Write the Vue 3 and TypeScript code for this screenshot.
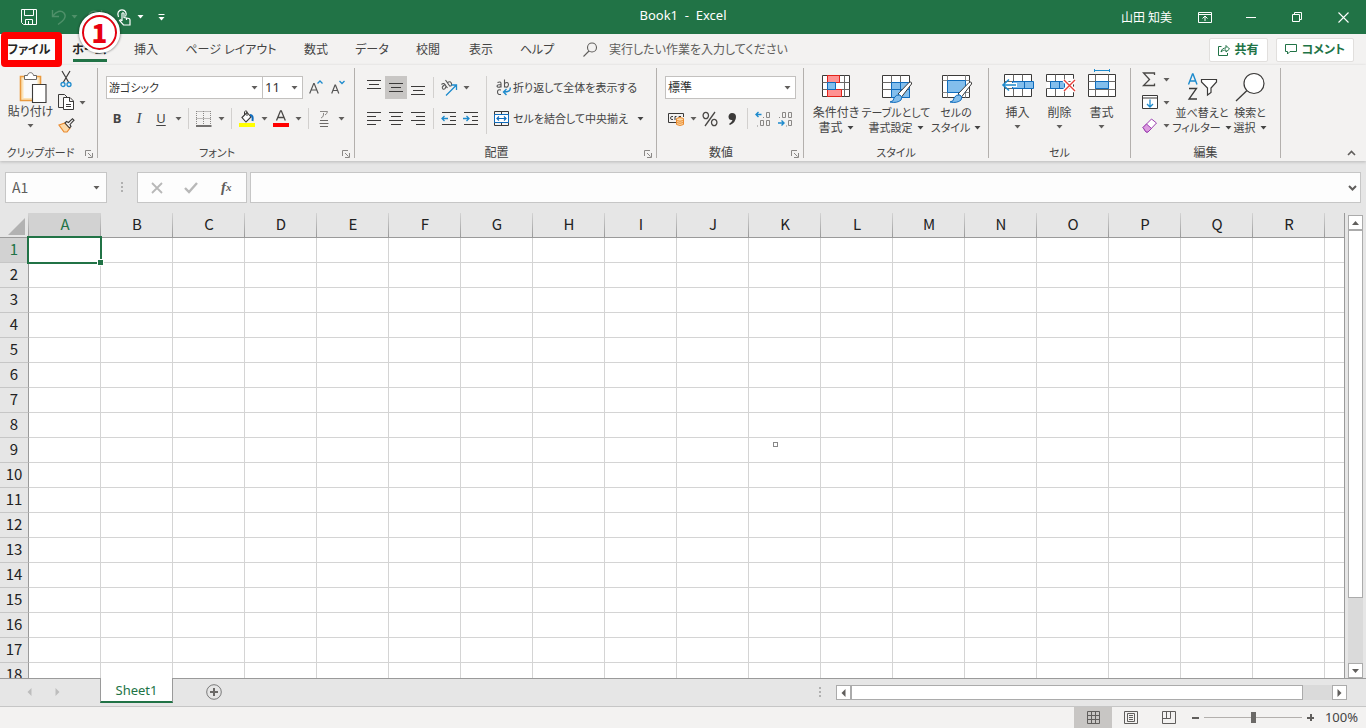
<script setup lang="ts">
import { h, ref } from 'vue'

type Shape = { d: string; f?: string; s?: string; w?: number; dash?: string }
type Glyph = { w: number; h: number; shapes: Shape[] }

const ink = '#3b3a39'
const soft = '#6b6967'
const blue = '#1e8bcd'
const deep = '#0f6cbd'
const sky = '#83beec'
const line = (d: string, s = ink, w = 1): Shape => ({ d, s, w })
const fill = (d: string, f: string): Shape => ({ d, f })

const frame = 'M.5 .5H27.5V22.5H.5Z'
const brush: Shape[] = [
  { d: 'M16 19L27 7.500Q30 6 29.500 9L19.500 22Z', f: '#fff', s: ink, w: 1 },
  { d: 'M8 27Q12 26.500 12 23Q14 19 18 20Q21 22 19 25Q15 28.500 8 27Z', f: sky, s: deep, w: 1 },
]

const glyphs: Record<string, Glyph> = {
  caret: { w: 7, h: 4, shapes: [fill('M.5 0H6.5L3.5 3.5Z', 'currentColor')] },
  save: { w: 16, h: 16, shapes: [line('M.5 .5H15.5V15.5H2.5L.5 13.5ZM3.5 .5V6.5H12.5V.5M4.5 15.5V10.5H11.5V15.5M7.5 12V15', '#fff')] },
  undo: { w: 16, h: 16, shapes: [line('M1.5 1V7.5H8M2 7C5 2 10 1 13 4C16 8 13 11 7 15.5', '#4f9069', 1.4)] },
  redo: { w: 16, h: 16, shapes: [line('M14.5 1V7.5H8M14 7C11 2 6 1 3 4C0 8 3 11 9 15.5', '#4f9069', 1.4)] },
  touch: { w: 14, h: 17, shapes: [line('M1.5 8C-.5 4 2 .8 5 .8S10.500 4 8.500 7.500M5 12V4.500Q6 3 7 4.500V8.500L12 9.500Q13 10 13 11V16H6.500L2.500 11.500Q3.500 10 5 12M9.500 9V11', '#fff', 1.2)] },
  more: { w: 7, h: 7, shapes: [line('M.5 .5H6.500', '#fff'), fill('M.5 3H6.500L3.500 6.500Z', '#fff')] },
  ribbonMode: { w: 14, h: 11, shapes: [line('M.5 .5H13.500V10.500H.5ZM.5 2.500H13.500M7 9V4.500M4.500 6.500L7 4L9.500 6.500', '#fff')] },
  minimize: { w: 10, h: 10, shapes: [line('M0 5.500H10', '#fff')] },
  restore: { w: 10, h: 10, shapes: [line('M.5 2.500H7.500V9.500H.5ZM2.500 2V.5H9.500V7.500H8', '#fff')] },
  close: { w: 11, h: 11, shapes: [line('M.5 .5L10.500 10.500M10.500 .5L.5 10.500', '#fff', 1.1)] },
  search: { w: 15, h: 15, shapes: [line('M13.500 5.500A4.500 4.500 0 1 1 4.500 5.500A4.500 4.500 0 1 1 13.500 5.500ZM6 9L.5 14.500', '#605e5c', 1.1)] },
  share: { w: 12, h: 12, shapes: [line('M3.500 2.500H.5V11.500H9.500V9M3 8C3.500 5 5.500 4 8 4V1.500L11.500 5L8 8V6C6 6 4.500 6.500 3 8Z', '#217346')] },
  comment: { w: 12, h: 11, shapes: [line('M.5 .5H11.500V7.500H5L2.500 10V7.500H.5Z', '#217346')] },
  paste: { w: 28, h: 31, shapes: [
    { d: 'M1.500 4.500H21.500V28.500H1.500Z', f: '#fbe3b8', s: '#ea9a3e', w: 1.6 },
    fill('M4.500 7H18.500V26H4.500Z', '#fafafa'),
    { d: 'M5.500 7.500V3.500H8.500C9 -.3 14 -.3 14.500 3.500H17.500V7.500Z', f: '#fff', s: soft, w: 1 },
    { d: 'M13.500 12.500H27V30.500H13.500Z', f: '#fff', s: ink, w: 1.1 }] },
  cut: { w: 12, h: 17, shapes: [line('M2 0L8.500 11M10 0L3.500 11', ink, 1.2), line('M5 13.500A2 2 0 1 1 1 13.500A2 2 0 1 1 5 13.500ZM11 13.500A2 2 0 1 1 7 13.500A2 2 0 1 1 11 13.500Z', blue, 1.3)] },
  copy: { w: 17, h: 17, shapes: [
    { d: 'M5 13.500H.5V.5H6.500L9 3', s: ink, w: 1 },
    { d: 'M5.500 3.500H12L15.500 7V15.500H5.500ZM11.500 4V7.500H15M8 10.500H13M8 12.500H13', f: '#fff', s: ink, w: 1 }] },
  painter: { w: 17, h: 15, shapes: [
    { d: 'M1 7L7 5L12 10L9 14H6Z', f: '#fbd9a8', s: '#ea8a2e', w: 1.2 },
    { d: 'M7 5L8.500 3.500L10.500 4.500L14.500 .7L16 2.200L12 6.500L13 8.500L11.500 10Z', f: '#f3f2f1', s: ink, w: 1.1 }] },
  grow: { w: 14, h: 14, shapes: [line('M.7 12.500L4.700 2.500H5.200L9.200 12.500M2.200 9H7.700', '#555', 1.2), line('M8.500 2.500L11 0L13.500 2.500', blue, 1.3)] },
  shrink: { w: 14, h: 14, shapes: [line('M.7 12.500L4 4H4.500L7.800 12.500M2 9.500H6.500', '#555', 1.2), line('M8.500 0L11 2.500L13.500 0', blue, 1.3)] },
  border: { w: 16, h: 16, shapes: [
    { d: 'M.5 .5H15M.5 7.500H15M.5 0V14M7.500 0V14M14.500 0V14', s: '#8a8886', w: 1, dash: '1 1' },
    line('M0 15H15.500', ink, 1.4)] },
  bucket: { w: 16, h: 17, shapes: [
    { d: 'M3 7.500L8 2.500L12 7L7 12Z', f: '#fff', s: ink, w: 1.1 },
    line('M8 6V1.500Q6.500 -.3 5.500 2V5', ink), line('M11 5Q14.500 5 13.500 11', deep, 2),
    fill('M0 13H16V17H0Z', '#ffff00')] },
  fontColor: { w: 16, h: 17, shapes: [line('M3.500 10.500L7.500 .8H8.300L12.300 10.500M5 7.500H11', '#4a4846', 1.3), fill('M0 13H16V17H0Z', '#ff0000')] },
  phonetic: { w: 10, h: 18, shapes: [line('M1 1.500H8.500Q8 4 6 5M4.500 3V5Q4 7.500 2 8', '#8a8886'), line('M1 10.500H9M.5 13.500H9.500M1 16.500H9', soft)] },
  alignTop: { w: 16, h: 15, shapes: [line('M1 .5H15M3 4.500H13M1 8.500H15')] },
  alignMiddle: { w: 16, h: 15, shapes: [line('M1 3.500H15M3 7.500H13M1 11.500H15')] },
  alignBottom: { w: 16, h: 15, shapes: [line('M1 6.500H15M3 10.500H13M1 14.500H15')] },
  alignLeft: { w: 16, h: 15, shapes: [line('M1 1.500H15M1 5.500H10M1 9.500H15M1 13.500H10')] },
  alignCenter: { w: 16, h: 15, shapes: [line('M1 1.500H15M3 5.500H13M1 9.500H15M3 13.500H13')] },
  alignRight: { w: 16, h: 15, shapes: [line('M1 1.500H15M6 5.500H15M1 9.500H15M6 13.500H15')] },
  orient: { w: 18, h: 17, shapes: [
    line('M1.500 5.500Q4 3 6 7L7.500 9M4.500 6Q1 8 3 10Q5 11 6 7.500M5.500 1L10 7.500M7.500 3.500Q10.500 1.500 11.500 4.500Q12 7.500 9.500 7', '#555', 1.1),
    line('M6 16.500L16 6.500M11.500 6H16.500V11', blue, 1.3)] },
  outdent: { w: 16, h: 15, shapes: [line('M1 1.500H15M9 5.500H15M9 9.500H15M1 13.500H15'), line('M7 7.500H1M3.500 5L1 7.500L3.500 10', blue, 1.3)] },
  indent: { w: 16, h: 15, shapes: [line('M1 1.500H15M9 5.500H15M9 9.500H15M1 13.500H15'), line('M0 7.500H6M3.500 5L6 7.500L3.500 10', blue, 1.3)] },
  wrap: { w: 16, h: 17, shapes: [
    line('M1.500 3.500Q5 2 5 4.500V8.500M5 5.500Q1 5.500 1 7.300Q2 9.200 5 7.500M8.500 .5V8.500M8.500 4.500Q12 2 12.500 5.500Q12 9.500 8.500 7.500M5 11Q1.500 10 1.500 13T5 15.500', '#555', 1.1),
    line('M14 8.500Q15.500 13 7.500 13M10.500 10L7.500 13L10.500 16', blue, 1.4)] },
  merge: { w: 15, h: 15, shapes: [line('M.5 .5H14.500V14.500H.5ZM7.500 .5V3.500M7.500 11.500V14.500', ink),
    { d: 'M.5 3.500H14.500V11.500H.5Z', f: '#fff', s: deep, w: 1 }, line('M3 7.500H12M5 5.500L3 7.500L5 9.500M10 5.500L12 7.500L10 9.500', deep, 1.2)] },
  currency: { w: 17, h: 14, shapes: [line('M8 10.500H.5V1.500H15.500V5M5 4.500Q2.500 4 2.500 6T5 7.500M7 8V4.500H8.500M11 8V4.500H13', ink),
    { d: 'M8.500 6.500Q12 4.500 15.500 6.500V12.500Q12 14.500 8.500 12.500Z', f: '#fbd9a8', s: '#ea8a2e', w: 1 },
    line('M8.500 8.500Q12 10 15.500 8.500M8.500 10.500Q12 12 15.500 10.500', '#ea8a2e')] },
  percent: { w: 16, h: 16, shapes: [line('M13 1L3 15M6.500 4.500A2.700 3.200 0 1 1 1.100 4.500A2.700 3.200 0 1 1 6.500 4.500ZM14.900 11.500A2.700 3.200 0 1 1 9.500 11.500A2.700 3.200 0 1 1 14.900 11.500Z', '#4a4846', 1.3)] },
  comma: { w: 10, h: 14, shapes: [fill('M5 1Q9 1 9 5Q9 10 3 13L2 12Q5 10 5.500 8Q1.500 8.500 1.500 4.500Q2 1 5 1Z', ink)] },
  incDecimal: { w: 16, h: 16, shapes: [line('M6.500 3.500H1M3.500 1L1 3.500L3.500 6', blue, 1.4),
    line('M11.500 1.500H14.500V6.500H11.500ZM8.500 6V7M2.500 14.500V15.500M5.500 9.500H8.500V14.500H5.500ZM11.500 9.500H14.500V14.500H11.500Z', '#8a8886')] },
  decDecimal: { w: 16, h: 16, shapes: [line('M1 12H7M4.500 9.500L7 12L4.500 14.500', blue, 1.4),
    line('M2.500 6V7M5.500 1.500H8.500V6.500H5.500ZM11.500 1.500H14.500V6.500H11.500ZM9.500 14.500V15.500M11.500 9.500H14.500V14.500H11.500Z', '#8a8886')] },
  conditional: { w: 28, h: 28, shapes: [{ d: 'M.5 .5H27.500V21.500H.5Z', f: '#fff', s: ink, w: 1 }, line('M.5 7.500H27.500M.5 14.500H27.500M5.500 .5V21.500M22.500 .5V21.500', soft),
    { d: 'M5.500 .5H17.500V7.500H5.500ZM5.500 14.500H19.500V21.500H5.500Z', f: '#ff9292', s: '#e2231a', w: 1 }, { d: 'M5.500 7.500H13.500V14.500H5.500Z', f: sky, s: deep, w: 1 }] },
  tableFormat: { w: 28, h: 28, shapes: [{ d: frame, f: '#fff', s: ink, w: 1 }, fill('M9 8H27V22H9Z', sky), line('M.5 7.500H27.500M.5 14.500H27.500M9.500 .5V22.500M18.500 .5V22.500', soft), line('M9.500 7.500H27.500M9.500 14.500H27.500M9.500 7.500V22.500H27.500V7.500M18.500 7.500V22.500', deep), ...brush] },
  cellStyle: { w: 28, h: 28, shapes: [{ d: frame, f: '#fff', s: ink, w: 1 }, line('M.5 5.500H27.500M.5 17.500H27.500M5.500 .5V22.500M23.500 .5V22.500', '#8a8886'), { d: 'M5.500 5.500H23.500V17.500H5.500Z', f: sky, s: deep, w: 1 }, ...brush] },
  insertCells: { w: 32, h: 29, shapes: [{ d: 'M2.500 2.500H29.500V24.500H2.500Z', f: '#fff', s: ink, w: 1 }, line('M2.500 9.500H29.500M2.500 16.500H29.500M11.500 2.500V24.500M20.500 2.500V24.500', soft),
    { d: 'M10.500 9.500H31.500V16.500H10.500ZM22.500 9.500V16.500', f: sky, s: deep, w: 1 }, line('M15 13H2', '#fff', 4), line('M14 13H1M7 7.500L1 13L7 18.500', blue, 1.6)] },
  deleteCells: { w: 30, h: 29, shapes: [{ d: 'M1.500 9.500V2.500H28.500V24.500H1.500V16.500', f: '#fff', s: ink, w: 1 }, line('M1.500 9.500H28M1.500 16.500H28M10.500 2.500V24.500M19.500 2.500V24.500', soft),
    { d: 'M5.500 9.500H19.500V16.500H5.500ZM14.500 9.500V16.500', f: sky, s: deep, w: 1 }, line('M19 8L30 19M30 8L19 19', '#fff', 4), line('M19 8L30 19M30 8L19 19', '#e8403a', 1.4)] },
  formatCells: { w: 30, h: 29, shapes: [{ d: 'M1.500 2.500H28.500V24.500H1.500Z', f: '#fff', s: ink, w: 1 }, line('M1.500 9.500H28.500M1.500 17.500H28.500M8.500 2.500V24.500M21.500 2.500V24.500', soft),
    { d: 'M8.500 9.500H21.500V16.500H8.500Z', f: sky, s: deep, w: 1 }, line('M7.500 -1.500H22.500', blue), line('M7.500 -3V0M22.500 -3V0', blue)] },
  sum: { w: 14, h: 15, shapes: [line('M12.500 3V1H1.500L7.500 7.500L1.500 13.500H12.500V11.500', '#4a4846', 1.3)] },
  fillDown: { w: 16, h: 15, shapes: [{ d: 'M.5 .5H15.500V13.500H.5ZM.5 3H15.500', f: '#fff', s: ink, w: 1 }, line('M8 4.500V12M5 9L8 12L11 9', blue, 1.3)] },
  clear: { w: 16, h: 15, shapes: [{ d: 'M1 9.500L9.500 1L14.500 5L6 14H4Z', f: '#fff', s: '#9b3fb0', w: 1 }, { d: 'M1 9.500L4.500 6L9.500 10.500L6 14H4Z', f: '#dc9be0', s: '#9b3fb0', w: 1 }] },
  sort: { w: 30, h: 29, shapes: [line('M1.500 11.500L5.500 1H6L10 11.500M3 8H8.500', blue, 1.4), line('M2 15.500H9.500L2 26H10', ink, 1.3), { d: 'M14.500 6.500H29.500V9L24 15V19.500L20.500 22V15L14.500 9Z', f: '#fff', s: ink, w: 1.2 }] },
  find: { w: 30, h: 29, shapes: [{ d: 'M29 10.500A10 10 0 1 1 9 10.500A10 10 0 1 1 29 10.500Z', f: '#fff', s: ink, w: 1.2 }, line('M12 17.500L1 28', ink, 1.3)] },
  launcher: { w: 8, h: 8, shapes: [line('M.5 6V.5H6M7.500 3V7.500H3M3 3L6.500 6.500', '#8a8886')] },
  chevUp: { w: 9, h: 6, shapes: [line('M1 5L4.500 1.500L8 5', '#605e5c', 1.6)] },
  chevDown: { w: 9, h: 6, shapes: [line('M1 1L4.500 4.500L8 1', '#605e5c', 2)] },
  cancel: { w: 12, h: 12, shapes: [line('M1 1L11 11M11 1L1 11', '#b8b8b8', 1.8)] },
  enter: { w: 14, h: 12, shapes: [line('M1 6L5 10L13 1', '#b8b8b8', 2.4)] },
  dots: { w: 2, h: 12, shapes: [fill('M0 0H2V2H0ZM0 4H2V6H0ZM0 8H2V10H0Z', '#b0b0b0')] },
  triLeft: { w: 5, h: 8, shapes: [fill('M4.500 0V8L.5 4Z', 'currentColor')] },
  triRight: { w: 5, h: 8, shapes: [fill('M.5 0V8L4.500 4Z', 'currentColor')] },
  triUp: { w: 7, h: 4, shapes: [fill('M0 4H7L3.500 0Z', '#605e5c')] },
  triDown: { w: 7, h: 4, shapes: [fill('M0 0H7L3.500 4Z', '#605e5c')] },
  corner: { w: 17, h: 17, shapes: [fill('M17 0V17H0Z', '#b2b2b2')] },
  add: { w: 16, h: 16, shapes: [line('M15.300 8A7.300 7.300 0 1 1 .7 8A7.300 7.300 0 1 1 15.300 8Z', '#7a7a7a'), line('M8 4V12M4 8H12', soft, 2)] },
  viewGrid: { w: 13, h: 13, shapes: [line('M.5 .5H12.500V12.500H.5ZM4.500 .5V12.500M8.500 .5V12.500M.5 4.500H12.500M.5 8.500H12.500', '#605e5c')] },
  viewPage: { w: 14, h: 13, shapes: [line('M.5 .5H13.500V12.500H.5ZM3.500 2.500H10.500V10.500H3.500ZM5 4.500H9M5 6.500H9M5 8.500H9', '#605e5c')] },
  viewBreak: { w: 14, h: 13, shapes: [line('M.5 .5H13.500V12.500H.5ZM.5 7.500H8.500V.5M4.500 .5V7', '#605e5c')] },
}

const Icon = (props: { name: string }) => {
  const g = glyphs[props.name]
  return h('svg', { width: g.w, height: g.h, viewBox: `0 0 ${g.w} ${g.h}`, 'aria-hidden': 'true', overflow: 'visible' },
    g.shapes.map((p) => h('path', { d: p.d, fill: p.f ?? 'none', stroke: p.s, 'stroke-width': p.w, 'stroke-dasharray': p.dash })))
}
Icon.props = ['name']

const tabs = ['ファイル', 'ホーム', '挿入', 'ページ レイアウト', '数式', 'データ', '校閲', '表示', 'ヘルプ']
const styleTools = [
  { icon: 'conditional', a: '条件付き', b: '書式' },
  { icon: 'tableFormat', a: 'テーブルとして', b: '書式設定', dense: true },
  { icon: 'cellStyle', a: 'セルの', b: 'スタイル', dense: true },
]
const cellTools = [
  { icon: 'insertCells', a: '挿入' },
  { icon: 'deleteCells', a: '削除' },
  { icon: 'formatCells', a: '書式' },
]
const editTools = [
  { icon: 'sort', a: '並べ替えと', b: 'フィルター', dense: true },
  { icon: 'find', a: '検索と', b: '選択', dense: true },
]
const columns = Array.from({ length: 18 }, (_, i) => String.fromCharCode(65 + i))
const rows = Array.from({ length: 18 }, (_, i) => i + 1)
const zoom = ref(50)
const query = ref('')
const cellName = ref('A1')
const formula = ref('')
</script>

<template>
  <div class="app">
    <header class="title-bar">
      <div class="quick">
        <button class="q-save" aria-label="上書き保存"><Icon name="save" /></button>
        <button class="q-undo" aria-label="元に戻す"><Icon name="undo" /><Icon name="caret" /></button>
        <button class="q-redo" aria-label="やり直し"><Icon name="redo" /></button>
        <button class="q-touch" aria-label="タッチ/マウス モード"><Icon name="touch" /><Icon name="caret" /></button>
        <button aria-label="カスタマイズ"><Icon name="more" /></button>
      </div>
      <h1>Book1&nbsp; - &nbsp;Excel</h1>
      <div class="window">
        <span class="user">山田 知美</span>
        <button aria-label="リボンの表示オプション"><Icon name="ribbonMode" /></button>
        <button aria-label="最小化"><Icon name="minimize" /></button>
        <button aria-label="元に戻す (縮小)"><Icon name="restore" /></button>
        <button aria-label="閉じる"><Icon name="close" /></button>
      </div>
    </header>

    <nav class="tab-bar">
      <button v-for="(t, i) in tabs" :key="t" class="tab" :class="{ file: i === 0, active: i === 1 }">
        <span>{{ t }}</span>
        <i v-if="i === 0" class="mark"></i>
        <b v-if="i === 1" class="badge">1</b>
      </button>
      <label class="tell"><Icon name="search" /><input v-model="query" placeholder="実行したい作業を入力してください" /></label>
      <button class="pill"><Icon name="share" />共有</button>
      <button class="pill"><Icon name="comment" />コメント</button>
    </nav>

    <div class="ribbon">
      <section class="group clipboard">
        <div class="body">
          <button class="big"><Icon name="paste" /><span>貼り付け</span><Icon name="caret" /></button>
          <div class="stack">
            <button aria-label="切り取り"><Icon name="cut" /></button>
            <button aria-label="コピー"><Icon name="copy" /><Icon name="caret" /></button>
            <button aria-label="書式のコピー/貼り付け"><Icon name="painter" /></button>
          </div>
        </div>
        <footer class="dense">クリップボード<button class="launch" aria-label="クリップボードの設定"><Icon name="launcher" /></button></footer>
      </section>

      <section class="group font">
        <div class="body rows">
          <div class="line">
            <label class="pick family"><select class="dense" aria-label="フォント"><option>游ゴシック</option></select><Icon name="caret" /></label>
            <label class="pick size"><select aria-label="フォント サイズ"><option>11</option></select><Icon name="caret" /></label>
            <button class="tool first" aria-label="フォント サイズの拡大"><Icon name="grow" /></button>
            <button class="tool" aria-label="フォント サイズの縮小"><Icon name="shrink" /></button>
          </div>
          <div class="line">
            <button class="tool letter"><b>B</b></button>
            <button class="tool letter"><i>I</i></button>
            <button class="tool letter"><u>U</u></button>
            <button class="drop" aria-label="下線の種類"><Icon name="caret" /></button>
            <span class="sep"></span>
            <button class="tool" aria-label="罫線"><Icon name="border" /></button>
            <button class="drop" aria-label="罫線の種類"><Icon name="caret" /></button>
            <span class="sep"></span>
            <button class="tool" aria-label="塗りつぶしの色"><Icon name="bucket" /></button>
            <button class="drop" aria-label="塗りつぶしの色の選択"><Icon name="caret" /></button>
            <button class="tool" aria-label="フォントの色"><Icon name="fontColor" /></button>
            <button class="drop" aria-label="フォントの色の選択"><Icon name="caret" /></button>
            <span class="sep"></span>
            <button class="tool" aria-label="ふりがな"><Icon name="phonetic" /></button>
            <button class="drop" aria-label="ふりがなの設定"><Icon name="caret" /></button>
          </div>
        </div>
        <footer class="dense">フォント<button class="launch" aria-label="フォントの設定"><Icon name="launcher" /></button></footer>
      </section>

      <section class="group align">
        <div class="body">
          <div class="rows">
            <div class="line">
              <button class="tool" aria-label="上揃え"><Icon name="alignTop" /></button>
              <button class="tool on" aria-label="上下中央揃え"><Icon name="alignMiddle" /></button>
              <button class="tool" aria-label="下揃え"><Icon name="alignBottom" /></button>
              <span class="sep"></span>
              <button class="tool" aria-label="方向"><Icon name="orient" /></button>
              <button class="drop" aria-label="方向の選択"><Icon name="caret" /></button>
            </div>
            <div class="line">
              <button class="tool" aria-label="左揃え"><Icon name="alignLeft" /></button>
              <button class="tool" aria-label="中央揃え"><Icon name="alignCenter" /></button>
              <button class="tool" aria-label="右揃え"><Icon name="alignRight" /></button>
              <span class="sep"></span>
              <button class="tool" aria-label="インデントを減らす"><Icon name="outdent" /></button>
              <button class="tool" aria-label="インデントを増やす"><Icon name="indent" /></button>
            </div>
          </div>
          <span class="sep tall"></span>
          <div class="rows">
            <button class="line wide dense"><Icon name="wrap" />折り返して全体を表示する</button>
            <button class="line wide merge dense"><Icon name="merge" /><span>セルを結合して中央揃え</span><Icon name="caret" /></button>
          </div>
        </div>
        <footer>配置<button class="launch" aria-label="配置の設定"><Icon name="launcher" /></button></footer>
      </section>

      <section class="group number">
        <div class="body rows">
          <div class="line">
            <label class="pick format"><select aria-label="数値の書式"><option>標準</option></select><Icon name="caret" /></label>
          </div>
          <div class="line">
            <button class="tool" aria-label="通貨表示形式"><Icon name="currency" /></button>
            <button class="drop" aria-label="通貨の選択"><Icon name="caret" /></button>
            <button class="tool" aria-label="パーセント スタイル"><Icon name="percent" /></button>
            <button class="tool" aria-label="桁区切りスタイル"><Icon name="comma" /></button>
            <span class="sep"></span>
            <button class="tool" aria-label="小数点以下の表示桁数を増やす"><Icon name="incDecimal" /></button>
            <button class="tool" aria-label="小数点以下の表示桁数を減らす"><Icon name="decDecimal" /></button>
          </div>
        </div>
        <footer>数値<button class="launch" aria-label="数値の設定"><Icon name="launcher" /></button></footer>
      </section>

      <section class="group styles">
        <div class="body">
          <button v-for="t in styleTools" :key="t.a" class="big" :class="{ dense: t.dense }">
            <Icon :name="t.icon" /><span>{{ t.a }}</span><span class="with-caret">{{ t.b }}<Icon name="caret" /></span>
          </button>
        </div>
        <footer class="dense">スタイル</footer>
      </section>

      <section class="group cells">
        <div class="body">
          <button v-for="t in cellTools" :key="t.a" class="big">
            <Icon :name="t.icon" /><span>{{ t.a }}</span><Icon name="caret" />
          </button>
        </div>
        <footer class="dense">セル</footer>
      </section>

      <section class="group edit">
        <div class="body">
          <div class="stack">
            <button aria-label="合計"><Icon name="sum" /><Icon name="caret" /></button>
            <button aria-label="フィル"><Icon name="fillDown" /><Icon name="caret" /></button>
            <button aria-label="クリア"><Icon name="clear" /><Icon name="caret" /></button>
          </div>
          <button v-for="t in editTools" :key="t.a" class="big" :class="{ dense: t.dense }">
            <Icon :name="t.icon" /><span>{{ t.a }}</span><span class="with-caret">{{ t.b }}<Icon name="caret" /></span>
          </button>
        </div>
        <footer>編集</footer>
      </section>
      <button class="collapse" aria-label="リボンを折りたたむ"><Icon name="chevUp" /></button>
    </div>

    <div class="formula-bar">
      <label class="name-box"><input v-model="cellName" aria-label="名前ボックス" /><Icon name="caret" /></label>
      <Icon class="grip" name="dots" />
      <div class="fx-box">
        <button aria-label="キャンセル"><Icon name="cancel" /></button>
        <button aria-label="入力"><Icon name="enter" /></button>
        <button class="fx" aria-label="関数の挿入">f<small>x</small></button>
      </div>
      <label class="formula"><input v-model="formula" aria-label="数式バー" /><Icon name="chevDown" /></label>
    </div>

    <main class="sheet">
      <div class="viewport">
        <table>
          <thead>
            <tr>
              <th class="corner"><Icon name="corner" /></th>
              <th v-for="(c, i) in columns" :key="c" scope="col" :class="{ sel: i === 0 }">{{ c }}</th>
              <th class="rest"></th>
            </tr>
          </thead>
          <tbody>
            <tr v-for="r in rows" :key="r">
              <th scope="row" :class="{ sel: r === 1 }">{{ r }}</th>
              <td v-for="c in columns" :key="c"><span v-if="r === 1 && c === 'A'" class="cursor"></span><span v-if="r === 9 && c === 'K'" class="speck"></span></td>
              <td class="rest"></td>
            </tr>
          </tbody>
        </table>
      </div>
      <div class="v-scroll">
        <button aria-label="上へスクロール"><Icon name="triUp" /></button>
        <div class="track"><div class="thumb"></div></div>
        <button aria-label="下へスクロール"><Icon name="triDown" /></button>
      </div>
    </main>

    <div class="sheet-bar">
      <div class="nav">
        <button aria-label="前のシート"><Icon name="triLeft" /></button>
        <button aria-label="次のシート"><Icon name="triRight" /></button>
      </div>
      <button class="sheet-tab">Sheet1</button>
      <button class="add" aria-label="新しいシート"><Icon name="add" /></button>
      <Icon class="grip" name="dots" />
      <div class="h-scroll">
        <button aria-label="左へスクロール"><Icon name="triLeft" /></button>
        <div class="track"><div class="thumb"></div></div>
        <button aria-label="右へスクロール"><Icon name="triRight" /></button>
      </div>
    </div>

    <footer class="status">
      <button class="view on" aria-label="標準"><Icon name="viewGrid" /></button>
      <button class="view" aria-label="ページ レイアウト"><Icon name="viewPage" /></button>
      <button class="view" aria-label="改ページ プレビュー"><Icon name="viewBreak" /></button>
      <button class="step minus" aria-label="縮小"></button>
      <input v-model="zoom" type="range" min="0" max="100" aria-label="ズーム" />
      <button class="step plus" aria-label="拡大"></button>
      <span class="percent">100%</span>
    </footer>
  </div>
</template>

<style>
body { margin: 0; overflow: hidden; }
</style>

<style scoped>
.app {
  display: flex; flex-direction: column; height: 100vh; background: #e6e6e6; color: #444;
  font-family: "Noto Sans", "Noto Sans CJK JP", sans-serif; font-size: 12px; line-height: 15px;
  font-feature-settings: "palt";
}
.app * { box-sizing: border-box; }
.app :deep(svg) { display: block; flex: none; }
button { display: flex; align-items: center; justify-content: center; padding: 0; border: 0; background: none; color: inherit; font: inherit; font-feature-settings: inherit; white-space: nowrap; }
input, select { min-width: 0; padding: 0; border: 0; background: none; color: inherit; font: inherit; font-feature-settings: inherit; outline: 0; }
.dense { font-size: 11px; }

.title-bar { flex: 0 0 34px; display: grid; grid-template-columns: 1fr auto 1fr; align-items: center; background: #217346; color: #fff; }
.title-bar h1 { margin: 0 0 3px; font-size: 13px; font-weight: 400; }
.quick { display: flex; align-items: center; padding-left: 21px; }
.quick button { gap: 4px; }
.q-save { margin-right: 14px; }
.q-undo { margin-right: 9px; color: #4f9069; }
.q-redo { margin-right: 14px; }
.quick .q-touch { gap: 6px; margin-right: 14px; }
.window { display: flex; align-items: center; justify-content: flex-end; }
.window button { width: 46px; height: 34px; }
.user { margin-right: 10px; }

.tab-bar { flex: 0 0 31px; display: grid; grid-template-columns: 58px 62px 52px 118px 52px 60px 52px 54px 58px 1fr auto auto; align-items: center; padding-right: 12px; background: #f3f2f1; }
.tab { position: relative; height: 31px; }
.tab.file { background: #fcfcfc; color: #252423; font-weight: 700; }
.tab.active { color: #252423; font-weight: 700; }
.tab.active::after { content: ""; position: absolute; left: 15px; right: 13px; bottom: 3px; height: 3px; background: #217346; }
.mark { position: absolute; left: 1px; top: -2px; width: 61px; height: 35px; border: 7px solid #f00; border-radius: 4px; z-index: 2; }
.badge {
  position: absolute; left: 24px; top: -19px; width: 35px; height: 35px; border: 2px solid #e80010; border-radius: 50%; z-index: 3;
  outline: 3px solid #fff; background: #fff; box-shadow: 0 0 2px 4px rgba(0, 0, 0, .3);
  color: #e80010; font-family: "Noto Sans CJK JP", sans-serif; font-size: 26px; font-weight: 900; line-height: 30px; text-align: center;
}
.tell { display: flex; align-items: center; gap: 11px; padding-left: 17px; color: #605e5c; }
.tell input { flex: 1; }
.tell input::placeholder { color: #605e5c; opacity: 1; }
.pill { height: 24px; margin-left: 8px; padding: 0 8px; gap: 5px; border: 1px solid #e1dfdd; border-radius: 2px; background: #fff; color: #217346; font-weight: 700; }

.ribbon { position: relative; flex: 0 0 96px; display: flex; background: #f3f2f1; box-shadow: 0 1px 3px #b8b8b8; }
.group { display: flex; flex-direction: column; margin: 3px 0; border-right: 1px solid #b3b0ad; }
.group .body { display: flex; flex: 1; }
.group footer { position: relative; height: 10px; line-height: 10px; text-align: center; }
.launch { position: absolute; right: 4px; bottom: 0; }
.clipboard { flex: 0 0 98px; }
.clipboard footer { padding-right: 16px; }
.font { flex: 0 0 257px; }
.font footer, .align footer { padding-right: 18px; }
.align { flex: 0 0 302px; }
.number { flex: 0 0 147px; }
.number footer { padding-right: 18px; }
.styles { flex: 0 0 185px; }
.cells { flex: 0 0 142px; }
.edit { flex: 0 0 150px; }

.rows { display: flex; flex-direction: column; gap: 8px; }
.font .body, .number .body { flex-direction: column; padding: 8px 0 0 8px; }
.align .body { padding: 8px 0 0 8px; }
.line { display: flex; align-items: center; height: 23px; }
.tool { width: 22px; height: 23px; }
.tool.on { background: #c8c6c4; }
.tool.first { margin-left: 2px; }
.drop { width: 12px; height: 23px; color: #605e5c; }
.letter { font-size: 13px; }
.letter i { font-family: "Liberation Serif", serif; font-size: 15px; }
.letter u { text-underline-offset: 2px; }
.sep { flex: none; width: 1px; height: 21px; margin: 0 4px; background: #d2d0ce; }
.sep.tall { height: 58px; }
.pick { position: relative; display: flex; align-items: center; height: 23px; padding: 0 4px 0 2px; border: 1px solid #c3c1bf; background: #fff; color: #605e5c; }
.pick select { flex: 1; height: 21px; appearance: none; color: #333; }
.family { width: 157px; }
.size { width: 40px; border-left: 0; font-size: 13px; }
.format { width: 131px; }
.wide { justify-content: flex-start; gap: 1px; padding-left: 5px; }
.wide.merge { gap: 4px; padding-left: 3px; }
.wide.merge :deep(svg:last-child) { margin-left: 5px; }

.stack { display: flex; flex-direction: column; }
.stack button { justify-content: flex-start; height: 23px; gap: 4px; color: #605e5c; }
.clipboard .stack { margin-left: 5px; }
.clipboard .stack button:first-child { padding-left: 2px; }
.big { flex-direction: column; justify-content: flex-start; line-height: 15px; }
.big > :deep(svg:last-child) { margin-top: 5px; color: #605e5c; }
.with-caret { display: flex; align-items: center; gap: 4px; }
.clipboard .big { width: 45px; margin-left: 8px; padding-top: 4px; }
.clipboard .big > :deep(svg:first-child) { margin-left: 5px; }
.clipboard .big span { margin-top: 1px; }
.styles .body { padding: 7px 0 0 2px; }
.styles .big { width: 60px; }
.styles .big > :deep(svg) { margin-bottom: 2px; }
.cells .body { justify-content: center; padding-top: 4px; }
.cells .big { width: 42px; }
.cells .big > :deep(svg:first-child) { margin-bottom: 4px; }
.edit .stack { width: 34px; margin-left: 11px; }
.edit .stack button { justify-content: space-between; padding-right: 6px; }
.edit .big { width: 54px; margin-left: -1px; padding-top: 5px; }
.edit .big + .big { width: 44px; }
.edit .big > :deep(svg:first-child) { margin-bottom: 3px; }
.collapse { margin: auto 10px 5px auto; }

.formula-bar { flex: 0 0 52px; display: flex; align-items: flex-start; padding: 11px 5px 0; font-size: 14px; }
.name-box, .fx-box, .formula { display: flex; align-items: center; height: 31px; border: 1px solid #c6c6c6; background: #fdfdfd; }
.name-box { width: 102px; padding: 0 6px; font-family: "Noto Sans CJK JP", sans-serif; color: #605e5c; }
.name-box input { flex: 1; }
.formula-bar .grip { margin: 10px 14px 0 14px; }
.fx-box { width: 110px; justify-content: space-around; padding: 0 2px; }
.fx { width: 14px; color: #605e5c; font-family: "Liberation Serif", serif; font-size: 15px; font-style: italic; font-weight: 700; }
.fx small { font-size: 11px; }
.formula { flex: 1; margin-left: 3px; padding: 0 3px 0 6px; }
.formula input { flex: 1; }

.sheet { flex: 1; min-height: 0; display: flex; }
.viewport { flex: 1; min-width: 0; overflow: hidden; border-right: 1px solid #9a9a9a; background: #fff; font-family: "Noto Sans CJK JP", sans-serif; font-size: 15px; }
table { width: 100%; table-layout: fixed; border-spacing: 0; }
th, td { width: 72px; height: 25px; padding: 0 0 2px; line-height: 20px; }
th { font-weight: 400; color: #222; background: #e6e6e6; text-align: center; }
thead th { border-bottom: 1px solid #9a9a9a; background: linear-gradient(#d4d4d4, #9a9a9a) right / 1px 100% no-repeat #e6e6e6; }
tbody th { border-right: 1px solid #9a9a9a; border-bottom: 1px solid #c6c6c6; }
thead th.corner { width: 29px; }
thead th.rest { width: auto; background: #e6e6e6; }
.corner :deep(svg) { margin: 5px 0 0 8px; }
th.sel { background-color: #d2d2d2; color: #217346; }
td { position: relative; border-right: 1px solid #d4d4d4; border-bottom: 1px solid #d4d4d4; }
td.rest { border-right: 0; }
.cursor { position: absolute; inset: -2px; border: 2px solid #217346; z-index: 1; }
.cursor::after { content: ""; position: absolute; right: -3px; bottom: -3px; width: 5px; height: 5px; background: #217346; box-shadow: 0 0 0 1px #fff; }
.speck { position: absolute; left: 24px; top: 4px; width: 5px; height: 5px; border: 1px dashed #888; }

.v-scroll { flex: 0 0 21px; display: flex; flex-direction: column; padding: 2px 3px 0; }
.v-scroll button, .h-scroll button { flex: none; border: 1px solid #ababab; background: #fff; color: #605e5c; }
.v-scroll button { height: 15px; }
.track { flex: 1; background: #dadada; }
.thumb { border: 1px solid #ababab; background: #fff; }
.v-scroll .thumb { height: 85%; }

.sheet-bar { flex: 0 0 28px; display: flex; align-items: flex-start; border-top: 1px solid #9a9a9a; }
.nav { width: 100px; display: flex; gap: 23px; padding: 9px 0 0 27px; color: #bdbdbd; }
.sheet-tab { width: 73px; height: 25px; margin-top: -1px; padding-top: 2px; border: solid #9a9a9a; border-width: 0 1px; border-bottom: 2px solid #217346; background: #fff; color: #217346; font-size: 13px; }
.add { margin: 5px auto 0 33px; }
.sheet-bar .grip { margin: 8px 15px 0 0; }
.h-scroll { display: flex; flex: 0 1 511px; height: 15px; margin: 6px 19px 0 0; }
.h-scroll button { width: 15px; }
.h-scroll .thumb { width: 94%; height: 15px; }

.status { flex: 0 0 22px; display: flex; align-items: center; justify-content: flex-end; padding-right: 8px; border-top: 1px solid #c6c6c6; background: #f3f2f1; }
.view { width: 38px; height: 21px; }
.view.on { background: #c8c6c4; }
.step { position: relative; width: 7px; height: 7px; background: linear-gradient(#605e5c, #605e5c) center / 7px 2px no-repeat; }
.step.minus { margin-left: 4px; }
.step.plus { background: linear-gradient(#605e5c, #605e5c) center / 7px 2px no-repeat, linear-gradient(#605e5c, #605e5c) center / 2px 7px no-repeat; }
.status input { width: 98px; height: 12px; margin: 0 5px; appearance: none; background: linear-gradient(#b3b0ad, #b3b0ad) center / 100% 1px no-repeat; }
.status input::-webkit-slider-thumb { appearance: none; width: 5px; height: 11px; background: #6b6967; }
.percent { width: 44px; font-size: 13px; text-align: right; }
</style>
